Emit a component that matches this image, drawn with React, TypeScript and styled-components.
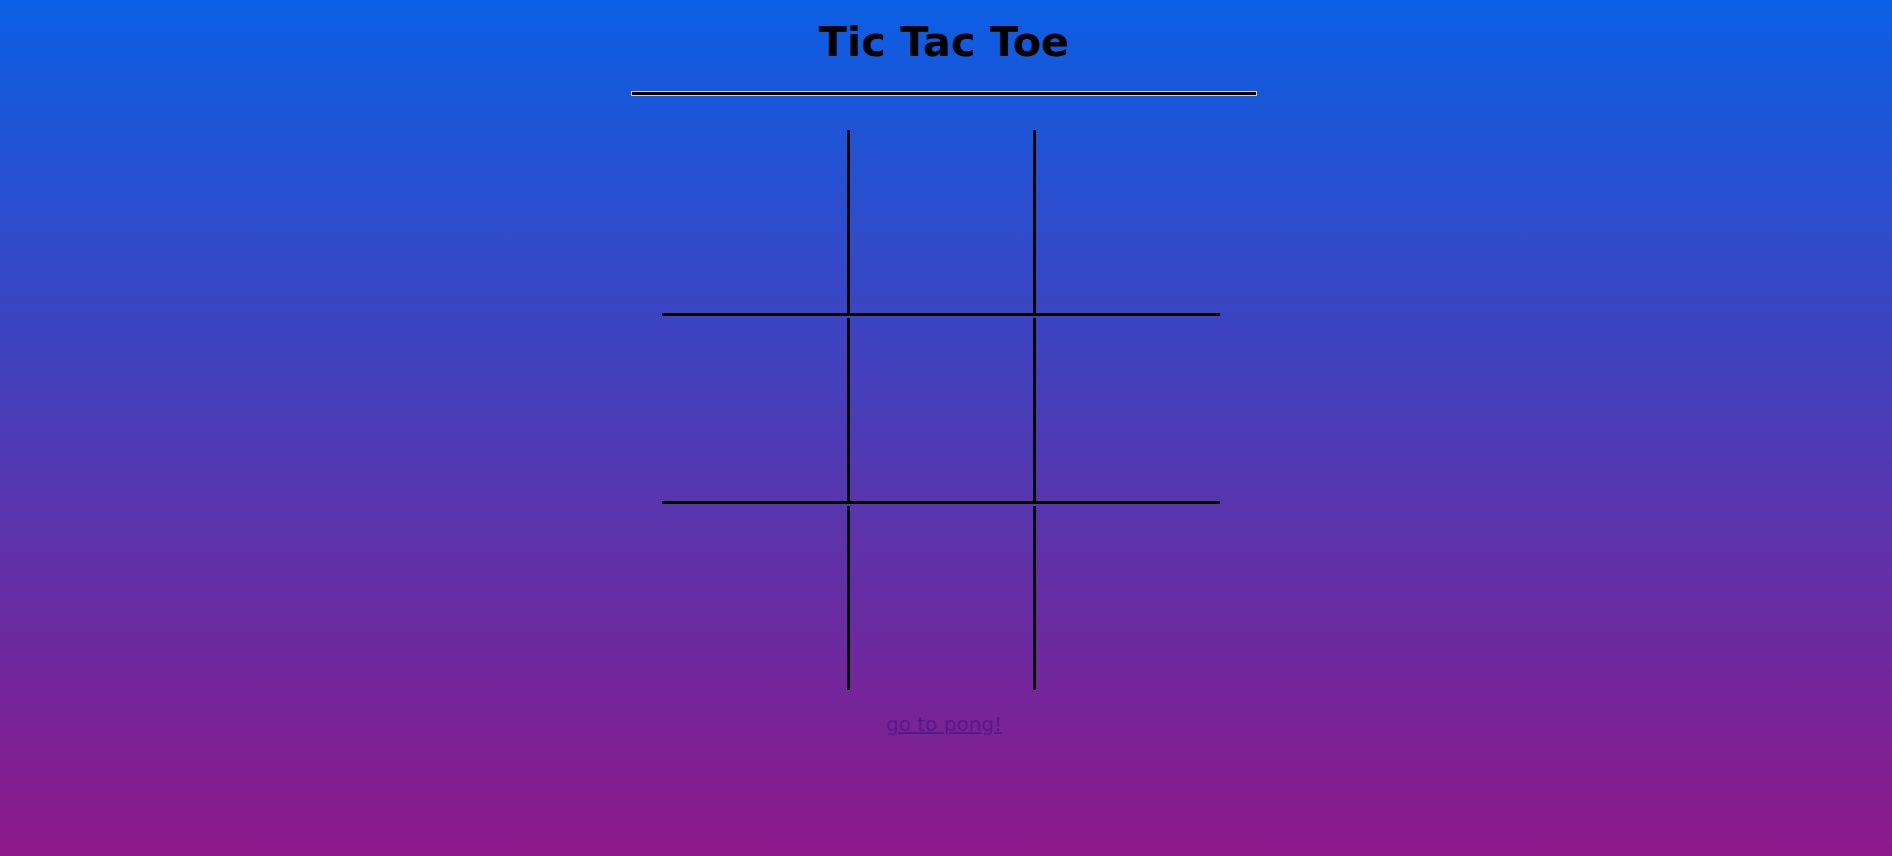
import React from "react";
import styled, { createGlobalStyle } from "styled-components";

const GlobalStyle = createGlobalStyle`
  html, body {
    margin: 0;
    padding: 0;
    height: 100%;
    overflow: hidden;
  }
  body {
    background: linear-gradient(to bottom, #0b5fe4, #8d1888);
    font-family: "DejaVu Sans", sans-serif;
  }
`;

const Page = styled.main`
  height: 100vh;
  box-sizing: border-box;
  display: flex;
  flex-direction: column;
  align-items: center;
  padding: 19px 4px 0 0;
`;

const Title = styled.h1`
  margin: 0;
  font-size: 41.4px;
  line-height: 46px;
  font-weight: bold;
  color: #000;
`;

const Rule = styled.hr`
  width: 624px;
  height: 3px;
  margin: 26px 0 0;
  background: #000;
  border: 1px solid #cfcfdc;
  box-sizing: content-box;
`;

const Board = styled.div`
  display: grid;
  grid-template-columns: 188px 186px 184px;
  row-gap: 2px;
  margin: 34px 6px 0 0;
`;

const Cell = styled.button<{ $right: boolean; $bottom: boolean }>`
  height: ${(p) => (p.$bottom ? 186 : 184)}px;
  box-sizing: border-box;
  padding: 0;
  margin: 0;
  background: transparent;
  border: none;
  border-right: ${(p) => (p.$right ? "3px solid #000" : "none")};
  border-bottom: ${(p) => (p.$bottom ? "3px solid #000" : "none")};
  cursor: pointer;
  font-family: "DejaVu Sans", sans-serif;
  font-size: 96px;
  color: #000;
`;

const PongLink = styled.a`
  margin-top: 22px;
  font-size: 20px;
  color: #551a8b;
  text-decoration: underline;
`;

export default function App() {
  const cells = Array.from({ length: 9 }, (_, i) => i);
  return (
    <>
      <GlobalStyle />
      <Page>
        <Title>Tic Tac Toe</Title>
        <Rule />
        <Board>
          {cells.map((i) => (
            <Cell key={i} $right={i % 3 !== 2} $bottom={i < 6} aria-label={`cell ${i + 1}`} />
          ))}
        </Board>
        <PongLink href="#pong">go to pong!</PongLink>
      </Page>
    </>
  );
}
